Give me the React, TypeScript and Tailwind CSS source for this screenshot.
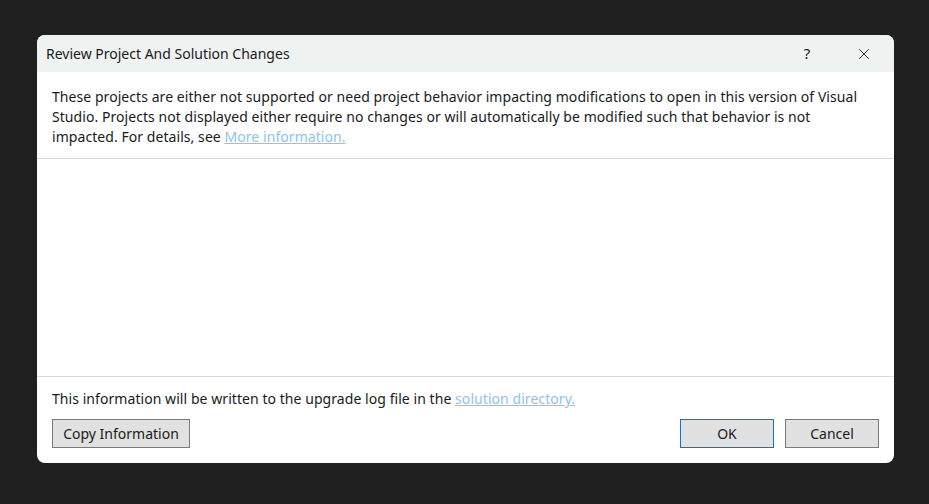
import { X } from 'lucide-react';

export default function App() {
  return (
    <div
      className="flex h-[504px] w-[929px] bg-[#202020] pl-[37px] pt-[35px]"
      style={{ fontFamily: '"Noto Sans", "Open Sans", sans-serif' }}
    >
      <div className="flex h-[428px] w-[857px] flex-col overflow-hidden rounded-lg bg-white text-[14px] text-[#1a1a1a]">
        {/* title bar */}
        <div className="flex h-[37px] shrink-0 items-center bg-[#eef2f1] pl-[9px]">
          <span className="flex-1 text-[14px] text-[#1b1b1b]">Review Project And Solution Changes</span>
          <span className="mr-[11px] w-[46px] text-center text-[15px] text-[#1b1b1b]">?</span>
          <span className="mr-[7px] flex w-[46px] items-center justify-center">
            <X size={18} strokeWidth={1.2} className="text-[#1b1b1b]" />
          </span>
        </div>

        {/* description */}
        <div className="border-b border-[#d9d9d9] px-[15px] pb-[11px] pt-[15px] leading-[20px] tracking-[0.06px]">
          <p className="whitespace-nowrap">
            These projects are either not supported or need project behavior impacting modifications to open in this version of Visual
            <br />
            Studio. Projects not displayed either require no changes or will automatically be modified such that behavior is not
            <br />
            impacted. For details, see{' '}
            <a href="#" className="text-[#8fc3ef] underline">
              More information.
            </a>
          </p>
        </div>

        {/* empty list area */}
        <div className="flex-1 border-b border-[#d9d9d9]" />

        {/* footer */}
        <div className="px-[15px] pb-[15px] pt-[12px]">
          <p className="leading-[20px] tracking-[0.06px]">
            This information will be written to the upgrade log file in the{' '}
            <a href="#" className="text-[#8fc3ef] underline">
              solution directory.
            </a>
          </p>
          <div className="mt-[10px] flex items-center">
            <button className="h-[29px] w-[138px] border border-[#7a7a7a] bg-[#e1e1e1] text-[14px] text-[#1a1a1a]">
              Copy Information
            </button>
            <div className="flex-1" />
            <button className="h-[29px] w-[94px] border border-[#0078d4] bg-[#e1e1e1] text-[14px] text-[#1a1a1a]">
              OK
            </button>
            <button className="ml-[11px] h-[29px] w-[94px] border border-[#7a7a7a] bg-[#e1e1e1] text-[14px] text-[#1a1a1a]">
              Cancel
            </button>
          </div>
        </div>
      </div>
    </div>
  );
}
